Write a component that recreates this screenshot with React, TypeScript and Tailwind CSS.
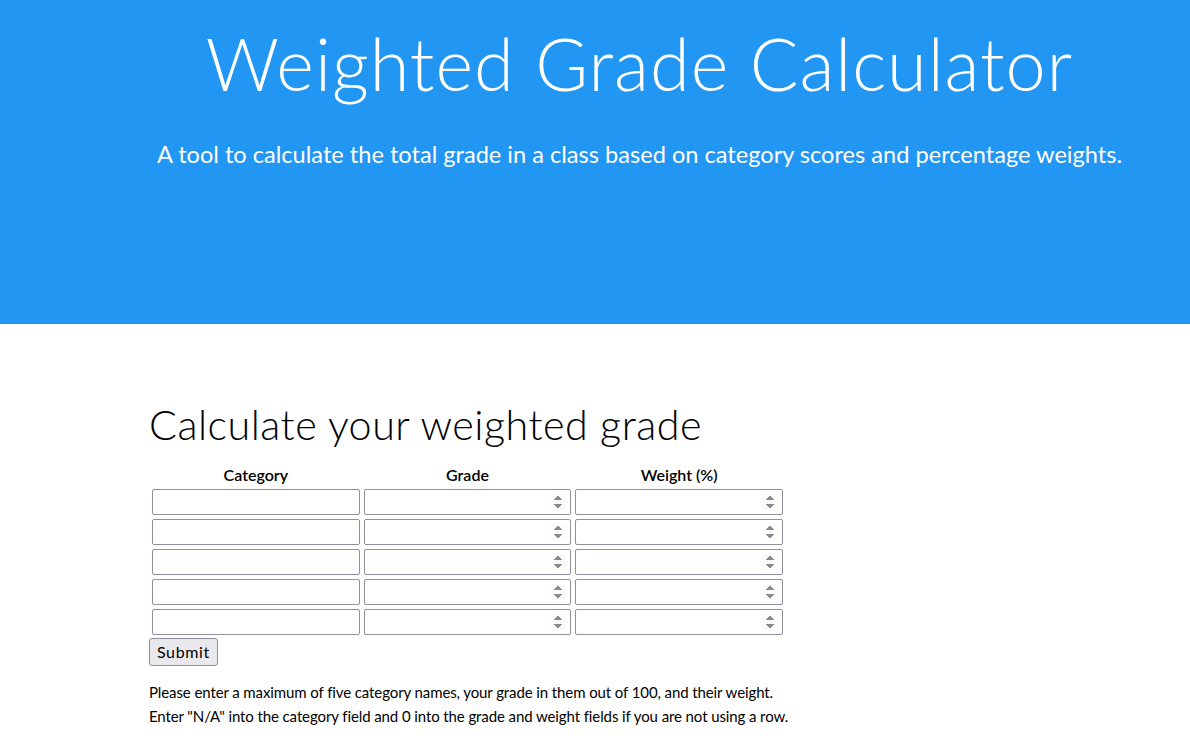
import React from 'react';

const rows = [0, 1, 2, 3, 4];

const numberInput =
  'h-[26px] w-full rounded-[2px] border border-[#8f8f9d] px-1 text-[14px] [&::-webkit-inner-spin-button]:opacity-100';

export default function App() {
  return (
    <div className="min-h-screen bg-white font-['Lato',sans-serif] text-black">
      {/* Header */}
      <header className="h-[324px] bg-[#2196f3] pl-[89px] text-center text-white">
        <h1 className="pt-[18px] text-[72px] leading-[90px] font-light tracking-[1px]">
          Weighted Grade Calculator
        </h1>
        <p className="mt-[31px] text-[23.6px] leading-[30px]">
          A tool to calculate the total grade in a class based on category scores and percentage weights.
        </p>
      </header>

      {/* Calculator */}
      <main className="pl-[149px] pt-[76px]">
        <h2 className="text-[41.3px] leading-[48px] font-light tracking-[0.5px]">Calculate your weighted grade</h2>
        <form className="mt-[16px]" onSubmit={(e) => e.preventDefault()}>
          <div className="grid w-[637px] grid-cols-3 gap-x-[4px] gap-y-[4px] px-[3px]">
            <div className="text-center text-[16px] leading-[21px] font-semibold">Category</div>
            <div className="text-center text-[16px] leading-[21px] font-semibold">Grade</div>
            <div className="text-center text-[16px] leading-[21px] font-semibold">Weight (%)</div>
            {rows.map((r) => (
              <React.Fragment key={r}>
                <input type="text" className="h-[26px] w-full rounded-[2px] border border-[#8f8f9d] px-1 text-[14px]" />
                <input type="number" className={numberInput} />
                <input type="number" className={numberInput} />
              </React.Fragment>
            ))}
          </div>
          <button
            type="submit"
            className="mt-[3px] h-[28px] rounded-[3px] border border-[#8f8f9d] bg-[#e9e9ed] px-[7px] text-[16px] tracking-[0.6px]"
          >
            Submit
          </button>
        </form>
        <div className="mt-[14px] text-[15px] leading-[24px] tracking-[-0.1px]">
          <p>Please enter a maximum of five category names, your grade in them out of 100, and their weight.</p>
          <p>Enter "N/A" into the category field and 0 into the grade and weight fields if you are not using a row.</p>
        </div>
      </main>
    </div>
  );
}
